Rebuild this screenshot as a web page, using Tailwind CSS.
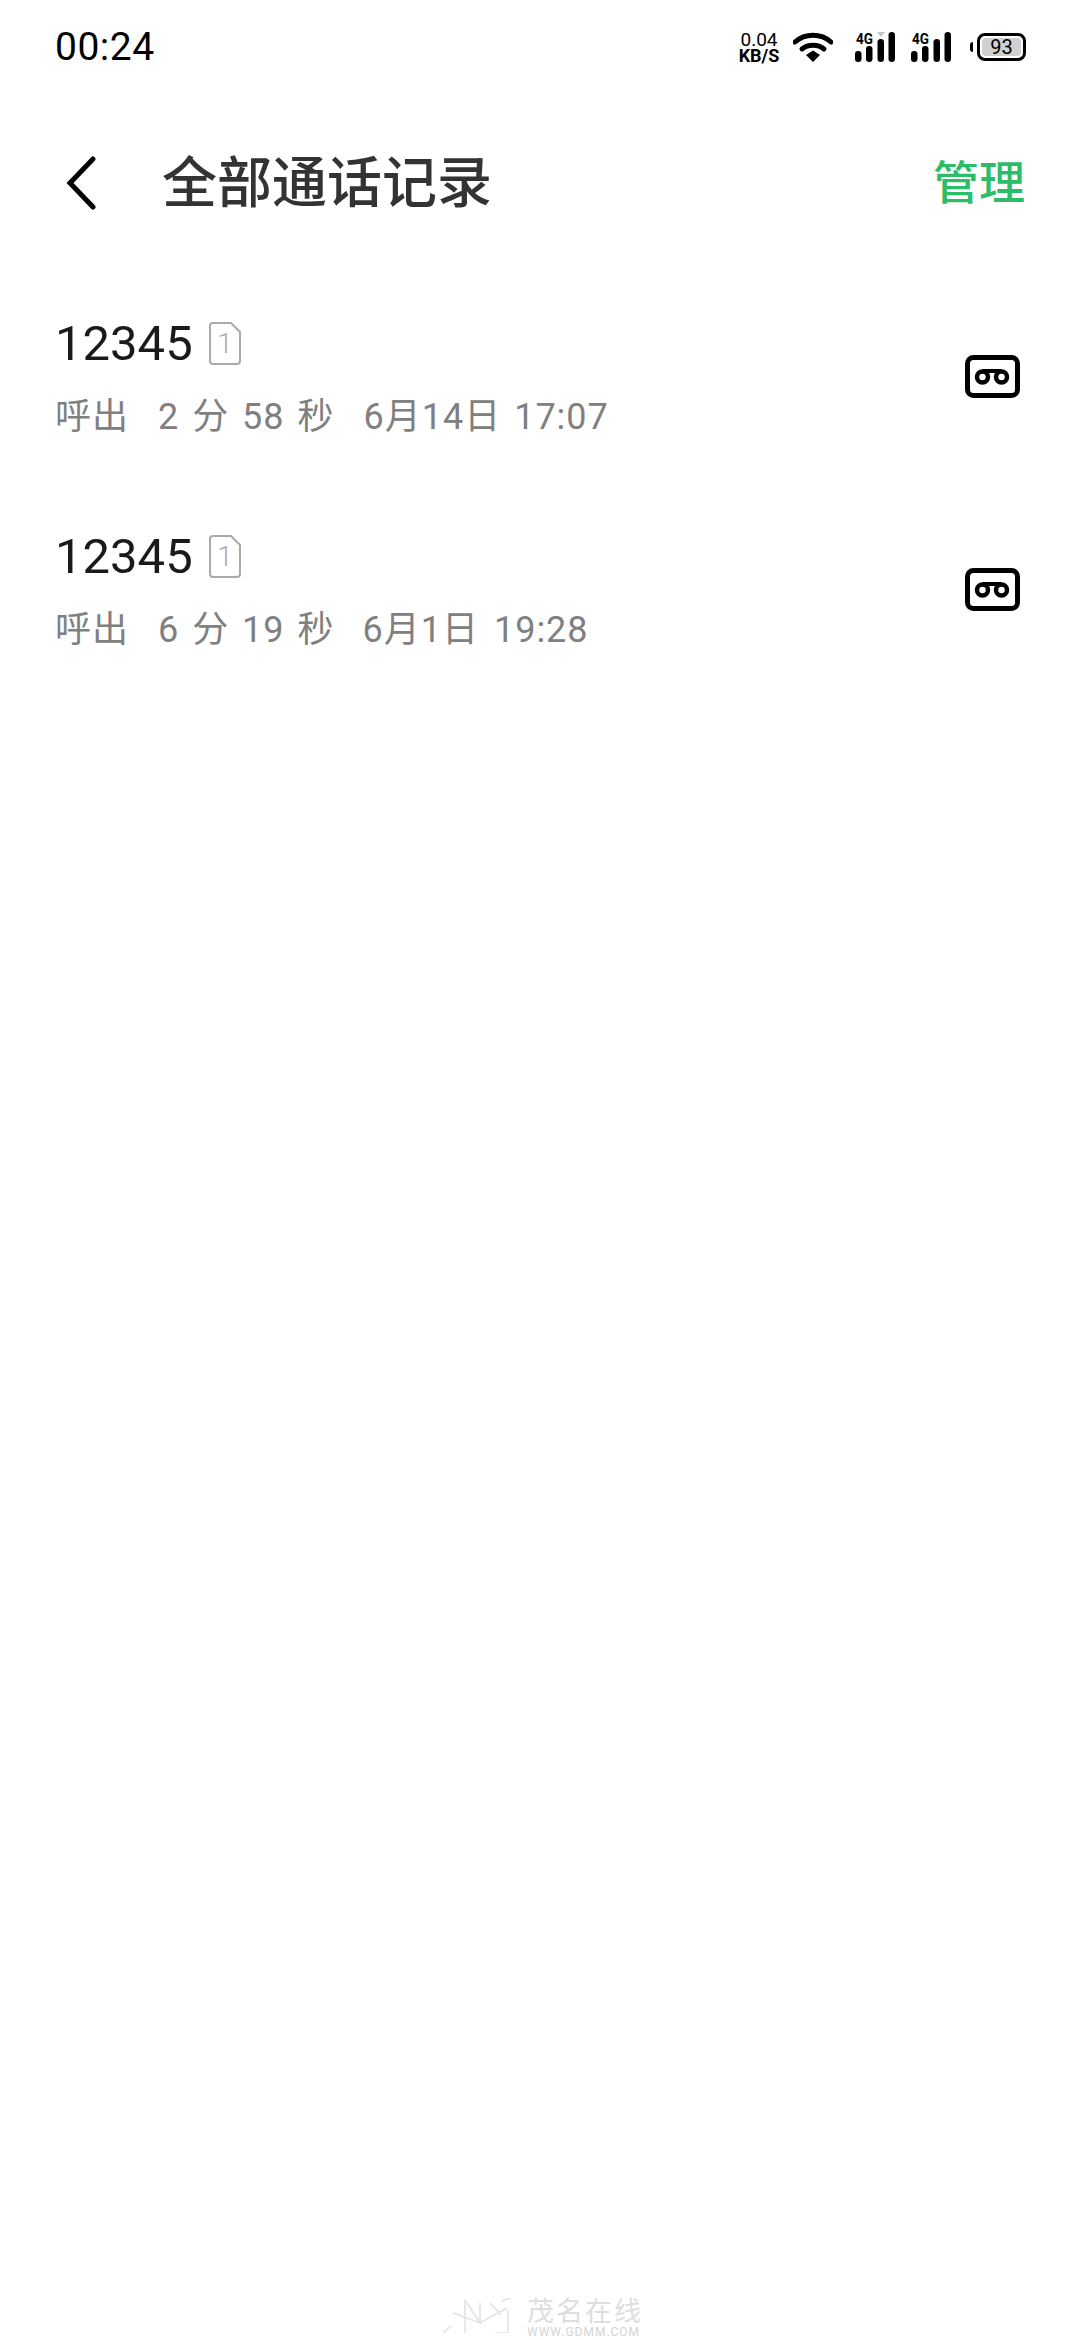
<!DOCTYPE html>
<html lang="zh-CN">
<head>
    <meta charset="UTF-8">
    <title>全部通话记录</title>
    <script src="https://cdn.jsdelivr.net/npm/@tailwindcss/browser@4"></script>
</head>
<body class="bg-white w-[1080px] h-[2340px] relative overflow-hidden font-['Roboto','Noto_Sans_CJK_SC',sans-serif]">
    <!-- status bar -->
    <div class="h-[94px] pl-[55px] pr-[54px] flex items-center justify-between text-black">
        <span class="text-[39px] leading-none tracking-[0.5px]">00:24</span>
        <div class="flex items-center">
            <div class="w-[44px] flex flex-col items-center leading-none mr-[12px]">
                <span class="text-[19px] leading-[17px]">0.04</span>
                <span class="text-[18px] leading-[15px] font-bold">KB/S</span>
            </div>
            <svg class="w-[40px] h-[30px] mr-[22px]" viewBox="0 0 40 30">
                <path d="M2 10 C12 1 28 1 38 10" fill="none" stroke="#000" stroke-width="5" stroke-linecap="round"/>
                <path d="M9 17 C15 12 25 12 31 17" fill="none" stroke="#000" stroke-width="5" stroke-linecap="round"/>
                <path d="M13 23 L20 18.5 L27 23 L20 30 Z" fill="#000"/>
            </svg>
            <svg class="w-[41px] h-[32px] mr-[15px]" viewBox="0 0 41 32">
                <text x="1" y="13" font-family="Roboto" font-size="14" font-weight="700" textLength="17" lengthAdjust="spacingAndGlyphs">4G</text>
                <rect x="0" y="20" width="6.5" height="11" rx="3.2"/>
                <rect x="11" y="15" width="6.5" height="16" rx="3.2"/>
                <rect x="22.5" y="8" width="6.5" height="23" rx="3.2"/>
                <rect x="33.5" y="1" width="6.5" height="30" rx="3.2"/>
                <path d="M22 1 H30 L26 6 Z" fill="#c4c4c4"/>
            </svg>
            <svg class="w-[41px] h-[32px] mr-[18px]" viewBox="0 0 41 32">
                <text x="1" y="13" font-family="Roboto" font-size="14" font-weight="700" textLength="17" lengthAdjust="spacingAndGlyphs">4G</text>
                <rect x="0" y="20" width="6.5" height="11" rx="3.2"/>
                <rect x="11" y="15" width="6.5" height="16" rx="3.2"/>
                <rect x="22.5" y="8" width="6.5" height="23" rx="3.2"/>
                <rect x="33.5" y="1" width="6.5" height="30" rx="3.2"/>
            </svg>
            <div class="flex items-center">
                <div class="w-[3px] h-[10px] bg-black rounded-l-full mr-[4px]"></div>
                <div class="w-[49px] h-[28px] border-[3px] border-black rounded-[8px] p-[2px] flex">
                    <div class="flex-1 bg-[#d0d0d0] rounded-[4px] flex items-center justify-center text-[20px] leading-none">93</div>
                </div>
            </div>
        </div>
    </div>

    <!-- title bar -->
    <div class="h-[72px] mt-[53px] pl-[66px] pr-[55px] flex items-center">
        <svg class="w-[30px] h-[54px] mr-[66px]" viewBox="0 0 30 54">
            <path d="M27 3 L4 27 L27 51" fill="none" stroke="#000" stroke-width="5" stroke-linecap="round" stroke-linejoin="miter"/>
        </svg>
        <h1 class="text-[55px] leading-none text-[#333333] font-medium flex-1">全部通话记录</h1>
        <span class="text-[46px] leading-none text-[#2dbd68] font-medium">管理</span>
    </div>

    <!-- call records -->
    <div class="mt-[46px]">
        <div class="h-[213px] pl-[55px] pr-[60px] flex items-center justify-between">
            <div>
                <div class="flex items-center h-[70px]">
                    <span class="text-[49px] leading-none text-[#1a1a1a]">12345</span>
                    <svg class="w-[32px] h-[43px] ml-[16px]" viewBox="0 0 32 43">
                        <path d="M4 1 H22 L31 10 V39 Q31 42 28 42 H4 Q1 42 1 39 V4 Q1 1 4 1 Z" fill="none" stroke="#aaaaaa" stroke-width="2"/>
                        <text x="16" y="31" text-anchor="middle" font-family="Roboto" font-weight="300" font-size="28" fill="#aaaaaa">1</text>
                    </svg>
                </div>
                <div class="text-[36px] leading-none text-[#808080] mt-[20px] flex tracking-[1px] [word-spacing:3px]">
                    <span>呼出</span>
                    <span class="ml-[29px]">2 分 58 秒</span>
                    <span class="ml-[29px]">6月14日 17:07</span>
                </div>
            </div>
            <svg class="w-[55px] h-[43px] mt-[10px]" viewBox="0 0 55 43">
                <rect x="2.5" y="2.5" width="50" height="38" rx="6" fill="none" stroke="#000" stroke-width="5"/>
                <circle cx="17.5" cy="22" r="5.5" fill="none" stroke="#000" stroke-width="4.5"/>
                <circle cx="36.5" cy="22" r="5.5" fill="none" stroke="#000" stroke-width="4.5"/>
                <path d="M17.5 16 H36.5" stroke="#000" stroke-width="4"/>
            </svg>
        </div>
        <div class="h-[213px] pl-[55px] pr-[60px] flex items-center justify-between">
            <div>
                <div class="flex items-center h-[70px]">
                    <span class="text-[49px] leading-none text-[#1a1a1a]">12345</span>
                    <svg class="w-[32px] h-[43px] ml-[16px]" viewBox="0 0 32 43">
                        <path d="M4 1 H22 L31 10 V39 Q31 42 28 42 H4 Q1 42 1 39 V4 Q1 1 4 1 Z" fill="none" stroke="#aaaaaa" stroke-width="2"/>
                        <text x="16" y="31" text-anchor="middle" font-family="Roboto" font-weight="300" font-size="28" fill="#aaaaaa">1</text>
                    </svg>
                </div>
                <div class="text-[36px] leading-none text-[#808080] mt-[20px] flex tracking-[1px] [word-spacing:3px]">
                    <span>呼出</span>
                    <span class="ml-[29px]">6 分 19 秒</span>
                    <span class="ml-[28px]">6月1日 <span class="ml-[2px]">19:28</span></span>
                </div>
            </div>
            <svg class="w-[55px] h-[43px] mt-[10px]" viewBox="0 0 55 43">
                <rect x="2.5" y="2.5" width="50" height="38" rx="6" fill="none" stroke="#000" stroke-width="5"/>
                <circle cx="17.5" cy="22" r="5.5" fill="none" stroke="#000" stroke-width="4.5"/>
                <circle cx="36.5" cy="22" r="5.5" fill="none" stroke="#000" stroke-width="4.5"/>
                <path d="M17.5 16 H36.5" stroke="#000" stroke-width="4"/>
            </svg>
        </div>
    </div>

    <!-- watermark -->
    <div class="absolute left-[443px] top-[2298px] flex items-start gap-[12px]">
        <svg class="w-[72px] h-[35px]" viewBox="0 0 72 35">
            <path d="M22 2 V35 M10 15 L37 25 L64 10 M22 2 L37 25 V5 M47 5 L58 17 M65 12 V35 M52 35 H65 M59 3 L73 -2 M0 35 L8 28" fill="none" stroke="#e2e2e2" stroke-width="1.5"/>
        </svg>
        <div class="flex flex-col items-start leading-none text-[#dedede] pt-[1px]">
            <span class="text-[27px] leading-[27px] tracking-[2px]">茂名在线</span>
            <span class="text-[12px] leading-[12px] tracking-[1px] text-[#d4d4d4]">WWW.GDMM.COM</span>
        </div>
    </div>
</body>
</html>
